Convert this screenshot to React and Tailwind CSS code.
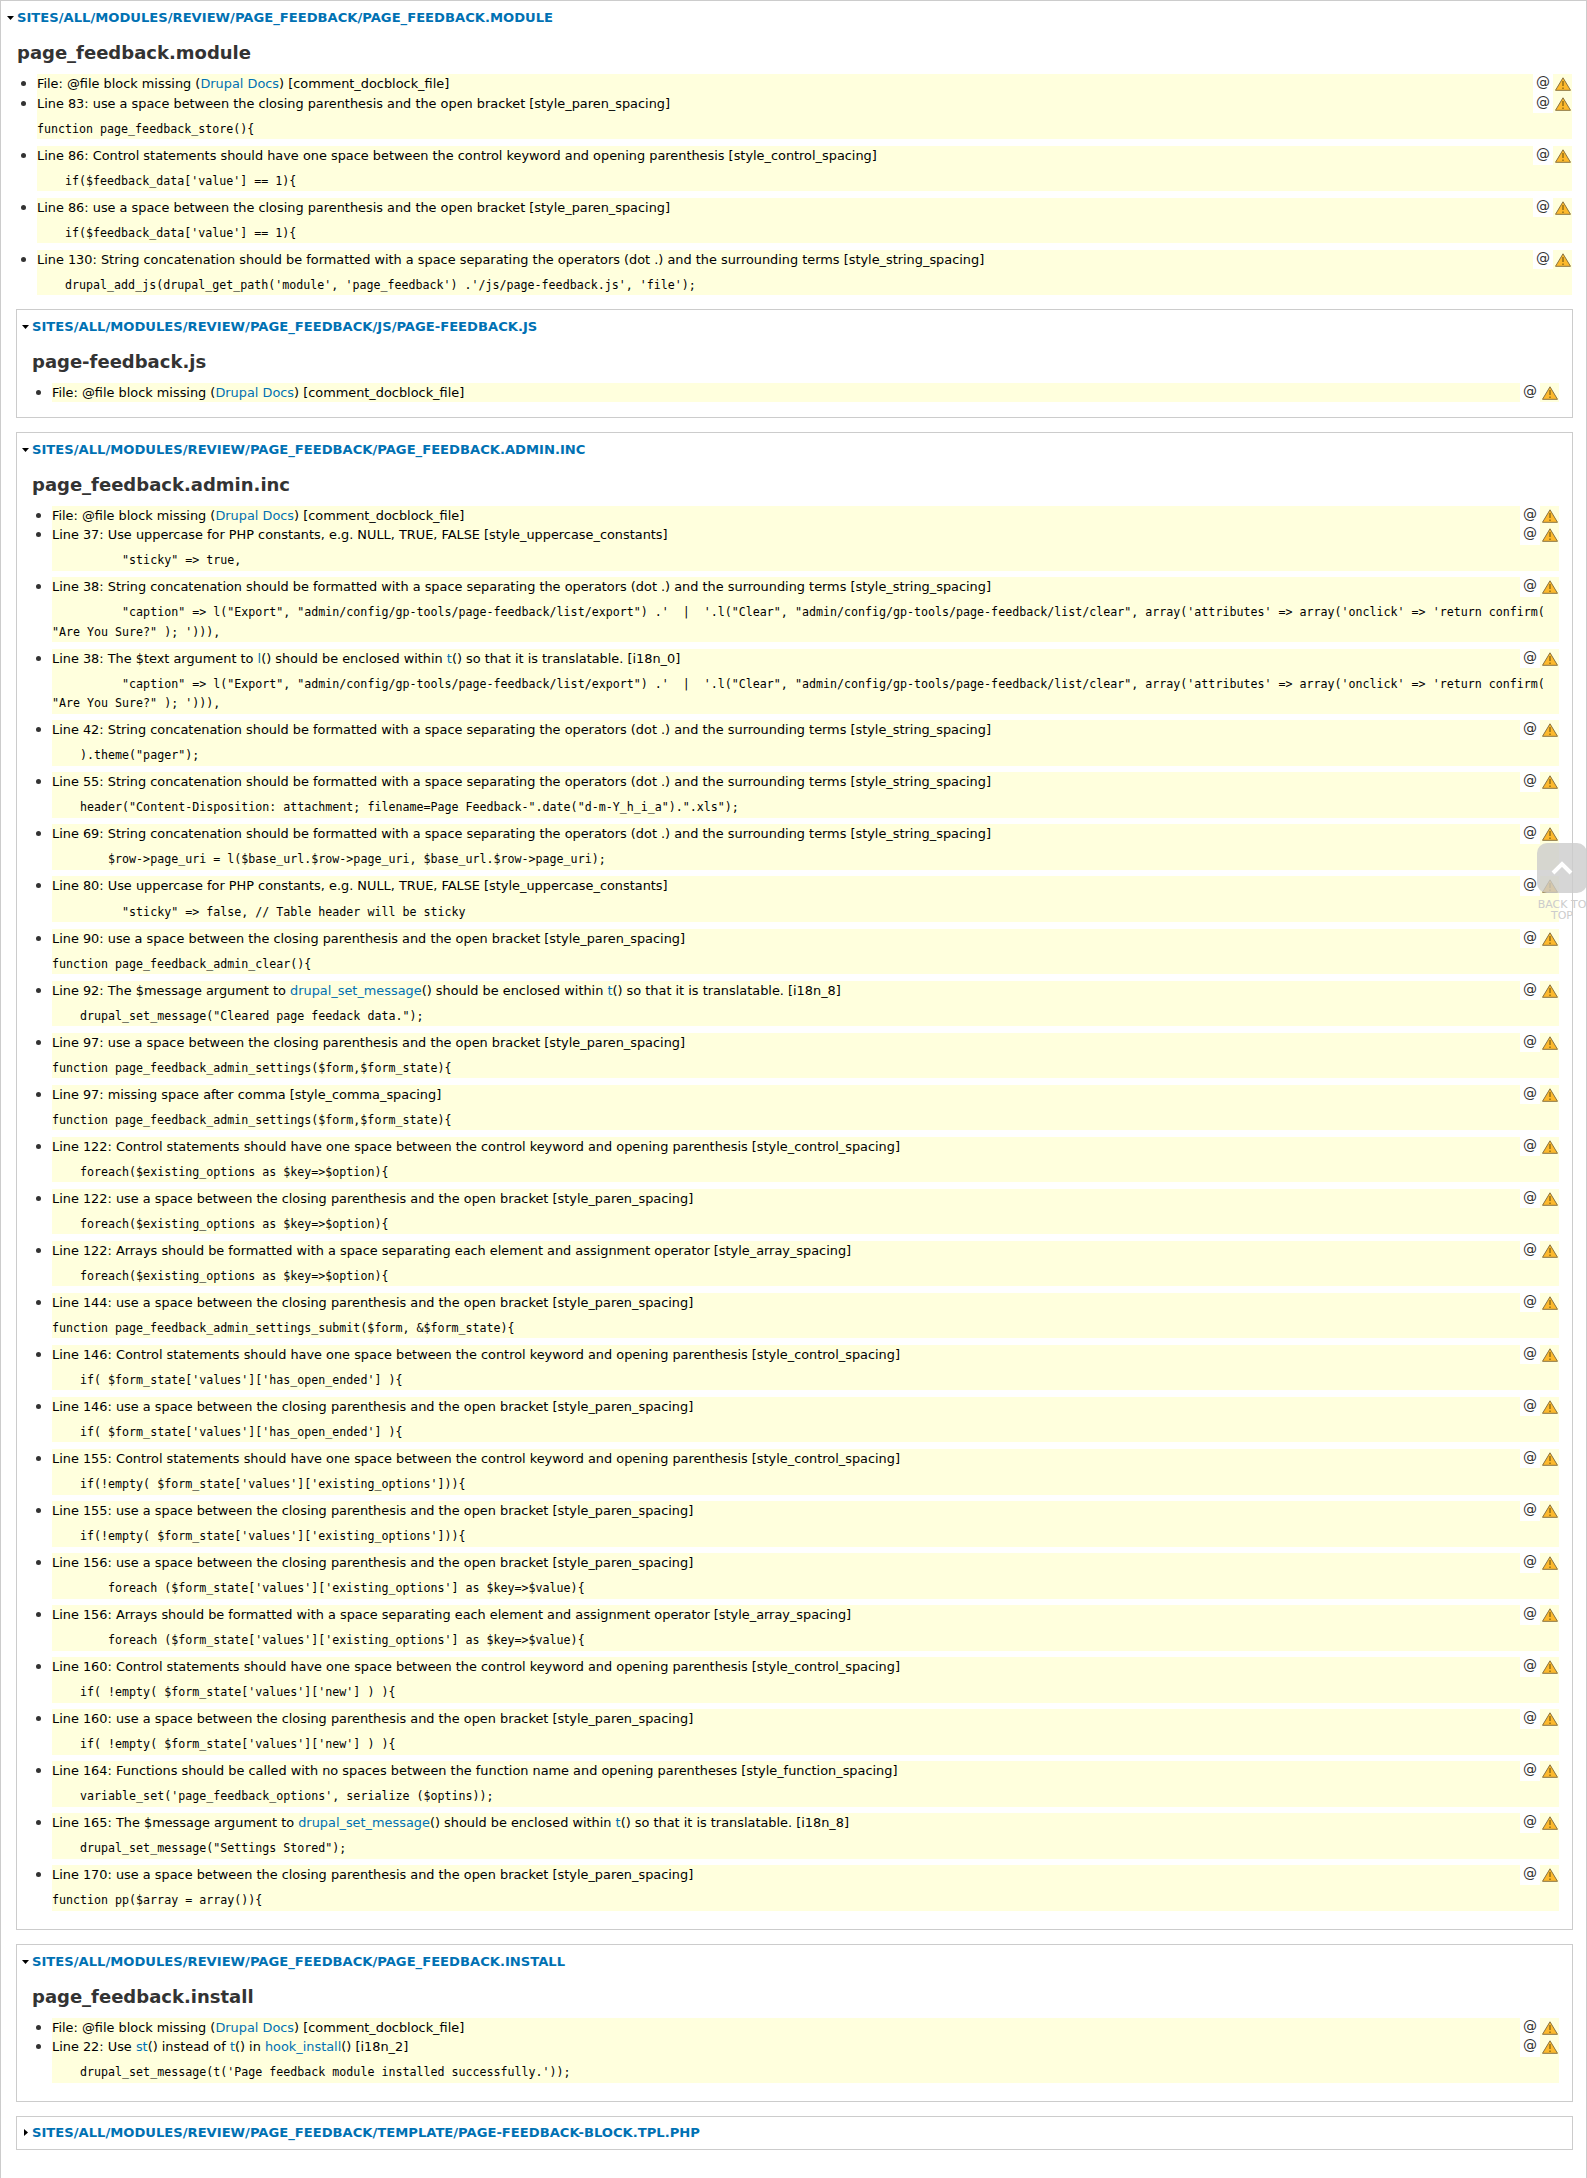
import React from 'react';

const FILE_MISSING = 'File: @file block missing ({Drupal Docs}) [comment_docblock_file]';
const PAREN = 'use a space between the closing parenthesis and the open bracket [style_paren_spacing]';
const CONTROL = 'Control statements should have one space between the control keyword and opening parenthesis [style_control_spacing]';
const CONCAT = 'String concatenation should be formatted with a space separating the operators (dot .) and the surrounding terms [style_string_spacing]';
const UPPER = 'Use uppercase for PHP constants, e.g. NULL, TRUE, FALSE [style_uppercase_constants]';
const ARR = 'Arrays should be formatted with a space separating each element and assignment operator [style_array_spacing]';
const CAPTION = `          "caption" => l("Export", "admin/config/gp-tools/page-feedback/list/export") .'  |  '.l("Clear", "admin/config/gp-tools/page-feedback/list/clear", array('attributes' => array('onclick' => 'return confirm(\n"Are You Sure?" ); '))),`;

const moduleRows = [
  [FILE_MISSING],
  [`Line 83: ${PAREN}`, 'function page_feedback_store(){'],
  [`Line 86: ${CONTROL}`, "    if($feedback_data['value'] == 1){"],
  [`Line 86: ${PAREN}`, "    if($feedback_data['value'] == 1){"],
  [`Line 130: ${CONCAT}`, "    drupal_add_js(drupal_get_path('module', 'page_feedback') .'/js/page-feedback.js', 'file');"],
];

const adminRows = [
  [FILE_MISSING],
  [`Line 37: ${UPPER}`, '          "sticky" => true,'],
  [`Line 38: ${CONCAT}`, CAPTION],
  ['Line 38: The $text argument to {l}() should be enclosed within {t}() so that it is translatable. [i18n_0]', CAPTION],
  [`Line 42: ${CONCAT}`, '    ).theme("pager");'],
  [`Line 55: ${CONCAT}`, '    header("Content-Disposition: attachment; filename=Page Feedback-".date("d-m-Y_h_i_a").".xls");'],
  [`Line 69: ${CONCAT}`, '        $row->page_uri = l($base_url.$row->page_uri, $base_url.$row->page_uri);'],
  [`Line 80: ${UPPER}`, '          "sticky" => false, // Table header will be sticky'],
  [`Line 90: ${PAREN}`, 'function page_feedback_admin_clear(){'],
  ['Line 92: The $message argument to {drupal_set_message}() should be enclosed within {t}() so that it is translatable. [i18n_8]', '    drupal_set_message("Cleared page feedack data.");'],
  [`Line 97: ${PAREN}`, 'function page_feedback_admin_settings($form,$form_state){'],
  ['Line 97: missing space after comma [style_comma_spacing]', 'function page_feedback_admin_settings($form,$form_state){'],
  [`Line 122: ${CONTROL}`, '    foreach($existing_options as $key=>$option){'],
  [`Line 122: ${PAREN}`, '    foreach($existing_options as $key=>$option){'],
  [`Line 122: ${ARR}`, '    foreach($existing_options as $key=>$option){'],
  [`Line 144: ${PAREN}`, 'function page_feedback_admin_settings_submit($form, &$form_state){'],
  [`Line 146: ${CONTROL}`, "    if( $form_state['values']['has_open_ended'] ){"],
  [`Line 146: ${PAREN}`, "    if( $form_state['values']['has_open_ended'] ){"],
  [`Line 155: ${CONTROL}`, "    if(!empty( $form_state['values']['existing_options'])){"],
  [`Line 155: ${PAREN}`, "    if(!empty( $form_state['values']['existing_options'])){"],
  [`Line 156: ${PAREN}`, "        foreach ($form_state['values']['existing_options'] as $key=>$value){"],
  [`Line 156: ${ARR}`, "        foreach ($form_state['values']['existing_options'] as $key=>$value){"],
  [`Line 160: ${CONTROL}`, "    if( !empty( $form_state['values']['new'] ) ){"],
  [`Line 160: ${PAREN}`, "    if( !empty( $form_state['values']['new'] ) ){"],
  ['Line 164: Functions should be called with no spaces between the function name and opening parentheses [style_function_spacing]', "    variable_set('page_feedback_options', serialize ($optins));"],
  ['Line 165: The $message argument to {drupal_set_message}() should be enclosed within {t}() so that it is translatable. [i18n_8]', '    drupal_set_message("Settings Stored");'],
  [`Line 170: ${PAREN}`, 'function pp($array = array()){'],
];

const installRows = [
  [FILE_MISSING],
  ['Line 22: Use {st}() instead of {t}() in {hook_install}() [i18n_2]', "    drupal_set_message(t('Page feedback module installed successfully.'));"],
];

function WarningIcon() {
  return (
    <svg width="16" height="14" viewBox="0 0 16 14" className="block">
      <path d="M8 .8 15.5 13.3H.5Z" fill="#fdb92c" stroke="#8a7440" strokeWidth="1" strokeLinejoin="round" />
      <path d="M8 4v5M8 10.5v1.5" stroke="#7a5c10" strokeWidth="1.2" />
    </svg>
  );
}

function Message({ text }) {
  // {name} marks a link inside the message
  return text.split(/(\{[^}]+\})/).map((part, i) =>
    part.startsWith('{') ? (
      <a key={i} href="#" className="text-[#0071b3]">{part.slice(1, -1)}</a>
    ) : (
      <span key={i}>{part}</span>
    )
  );
}

function Row({ text, code }) {
  return (
    <li className={`bg-[#ffffdd] marker:text-[15px] marker:text-[#333] ${code ? 'mb-[6.5px] last:mb-[3.5px]' : ''}`}>
      <div className="float-right flex h-[19.5px]">
        <div className="w-[20px] bg-white text-center text-[14px] leading-[16px] text-[#333]">@</div>
        <div className="w-[19px] pl-[2px] pt-[3px]">
          <WarningIcon />
        </div>
      </div>
      <div>
        <Message text={text} />
      </div>
      {code && (
        <pre className="mt-[6.55px] whitespace-pre-wrap font-['DejaVu_Sans_Mono',monospace] text-[11.65px] leading-[19.5px]">{code}</pre>
      )}
    </li>
  );
}

function Legend({ title, open = true }) {
  return (
    <div className="flex h-[19.5px] items-center">
      <svg width="10" height="10" viewBox="0 0 10 10" className="mr-[1px] -ml-[11px] shrink-0">
        {open ? <path d="M1 3h7L4.5 7Z" fill="#000" /> : <path d="M3 1v7l4-3.5Z" fill="#000" />}
      </svg>
      <a href="#" className="text-[13.13px] font-bold uppercase text-[#0071b3]">{title}</a>
    </div>
  );
}

function Section({ title, heading, rows, children, nested = true }) {
  return (
    <div className={nested ? 'ml-[15px] mr-[13px] mb-[14px] border border-[#ccc] pl-[15px] pr-[13px] pt-[7px] pb-[15px]' : ''}>
      <Legend title={title} />
      <h2 className={`mt-[12.5px] text-[18px] leading-[26px] font-bold text-[#333] ${nested ? 'mb-[7.5px]' : 'mb-[8px]'}`}>{heading}</h2>
      <ul className="list-disc pl-[20px]">
        {rows.map(([text, code], i) => (
          <Row key={i} text={text} code={code} />
        ))}
      </ul>
      {children}
    </div>
  );
}

export default function App() {
  return (
    <div className="relative h-[2178px] overflow-hidden bg-white font-['DejaVu_Sans',sans-serif] text-[12.88px] leading-[19.5px] text-black">
      <div className="min-h-[2178px] w-[1587px] border-x border-t border-[#ccc] pt-[7px]">
        <div className="pl-[16px] pr-[14px] mb-[14px]">
          <Section nested={false} title="sites/all/modules/review/page_feedback/page_feedback.module" heading="page_feedback.module" rows={moduleRows} />
        </div>
        <Section title="sites/all/modules/review/page_feedback/js/page-feedback.js" heading="page-feedback.js" rows={[[FILE_MISSING]]} />
        <Section title="sites/all/modules/review/page_feedback/page_feedback.admin.inc" heading="page_feedback.admin.inc" rows={adminRows} />
        <Section title="sites/all/modules/review/page_feedback/page_feedback.install" heading="page_feedback.install" rows={installRows} />
        <div className="ml-[15px] mr-[13px] border border-[#ccc] pl-[15px] py-[6px]">
          <Legend title="sites/all/modules/review/page_feedback/template/page-feedback-block.tpl.php" open={false} />
        </div>
      </div>

      {/* back to top overlay */}
      <div className="absolute top-[843px] left-[1537px] w-[50px] text-center text-[11px] leading-[11px] text-[#ccc]">
        <div className="flex h-[50px] items-center justify-center rounded-[10px] bg-[#ccc]/80">
          <svg width="24" height="16" viewBox="0 0 24 16">
            <path d="M3 13 12 4l9 9" fill="none" stroke="#fff" strokeWidth="4" />
          </svg>
        </div>
        <div className="mt-[6px] whitespace-nowrap">BACK TO<br />TOP</div>
      </div>
    </div>
  );
}
